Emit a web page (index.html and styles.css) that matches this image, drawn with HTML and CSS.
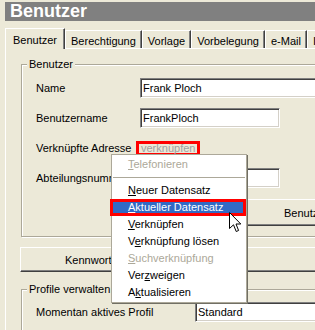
FILE: index.html
```html
<!DOCTYPE html>
<html lang="de">
<head>
  <meta charset="UTF-8" />
  <meta name="viewport" content="width=device-width, initial-scale=1.0"/>
  <title>Benutzer</title>
  <link rel="stylesheet" href="styles.css">
</head>
<body>

  <div class="window">
    <div class="caption">Benutzer</div>

    <div class="tabs">
      <div class="tab active">Benutzer</div>
      <div class="tab">Berechtigung</div>
      <div class="tab">Vorlage</div>
      <div class="tab">Vorbelegung</div>
      <div class="tab">e-Mail</div>
      <div class="tab">Info</div>
    </div>

    <div class="panel">
      <fieldset class="group">
        <legend>Benutzer</legend>
        <div class="form">
          <label>Name</label>
          <input type="text" class="field long" value="Frank Ploch" />

          <label>Benutzername</label>
          <input type="text" class="field" value="FrankPloch" />

          <label>Verknüpfte Adresse</label>
          <span class="link">verknüpfen</span>

          <label>Abteilungsnummer</label>
          <input type="text" class="field" value="" />

          <button class="btn user-btn">Benutzerrechte</button>
        </div>
      </fieldset>

      <button class="btn pass-btn">Kennwort ändern</button>

      <fieldset class="group profile">
        <legend>Profile verwalten</legend>
        <div class="form">
          <label>Momentan aktives Profil</label>
          <input type="text" class="field long" value="Standard" />
        </div>
      </fieldset>
    </div>
  </div>

  <!-- context menu of "verknüpfen" -->
  <div class="menu">
    <div class="menu-item disabled"><u>T</u>elefonieren</div>
    <div class="menu-sep"></div>
    <div class="menu-item"><u>N</u>euer Datensatz</div>
    <div class="menu-item current"><u>A</u>ktueller Datensatz</div>
    <div class="menu-item"><u>V</u>erknüpfen</div>
    <div class="menu-item">V<u>e</u>rknüpfung lösen</div>
    <div class="menu-item disabled"><u>S</u>uchverknüpfung</div>
    <div class="menu-item">Ver<u>z</u>weigen</div>
    <div class="menu-item">A<u>k</u>tualisieren</div>
  </div>

  <svg class="cursor" width="13" height="21" viewBox="0 0 13 21">
    <path d="M0.5 0.5 V16.5 L4.5 12.8 L7.2 19.5 L9.6 18.5 L7 12 H11.8 Z" fill="#fff" stroke="#000" stroke-width="1" stroke-linejoin="miter"/>
  </svg>

</body>
</html>
```

FILE: styles.css
```css
* {
  box-sizing: border-box;
}
html, body {
  margin: 0;
}
body {
  position: relative;
  width: 315px;
  height: 330px;
  overflow: hidden;
  background: #ece9d8;
  font-family: "Liberation Sans", Arial, sans-serif;
  font-size: 11px;
  color: #000;
}
.window {
  padding: 2px 0 0 5px;
}
.caption {
  height: 19px;
  line-height: 19px;
  padding-left: 5px;
  background: #808080;
  color: #fff;
  font-size: 18px;
  font-weight: bold;
}

/* tabs */
.tabs {
  position: relative;
  z-index: 1;
  display: flex;
  align-items: flex-end;
  height: 20px;
  margin-top: 7px;
  white-space: nowrap;
}
.tab {
  height: 18px;
  padding: 4px 5px 0;
  line-height: 13px;
  border-top: 1px solid #fff;
  border-left: 1px solid #fff;
  border-right: 1px solid #404040;
  box-shadow: inset -1px 0 #808080;
  background: #ece9d8;
}
.tab.active {
  height: 21px;
  margin-bottom: -1px;
  padding: 5px 7px 0;
}

/* tab page */
.panel {
  height: 290px;
  padding-left: 15px;
  border-top: 1px solid #fff;
  border-left: 1px solid #fff;
}
.group {
  width: 330px;
  min-width: 0;
  margin: 9px 0 0;
  padding: 7px 0 10px;
  border: 1px solid #aca899;
  box-shadow: inset 1px 1px #fff, 1px 1px #fff;
}
.group legend {
  margin-left: 5px;
  padding: 0 2px;
  line-height: 13px;
  background: #ece9d8;
}
.form {
  display: grid;
  grid-template-columns: 104px auto;
  align-items: center;
  row-gap: 10px;
  padding-left: 14px;
}
.form label {
  line-height: 20px;
  white-space: nowrap;
}
.field {
  width: 140px;
  height: 20px;
  padding: 0 2px;
  font: inherit;
  color: #000;
  background: #fff;
  border: 1px solid;
  border-color: #808080 #fff #fff #808080;
  box-shadow: inset 1px 1px #404040, inset -1px -1px #d4d0c8;
  outline: none;
}
.field.long {
  width: 200px;
}
.link {
  justify-self: start;
  margin-left: -4px;
  padding: 0 2px;
  line-height: 9px;
  border: 3px solid #f00;
  color: #a0a0a0;
}

/* buttons */
.btn {
  height: 27px;
  font: inherit;
  color: #000;
  text-align: left;
  white-space: nowrap;
  background: #ece9d8;
  border: 1px solid;
  border-color: #fff #404040 #404040 #fff;
  box-shadow: inset -1px -1px #808080;
}
.user-btn {
  grid-column: 2;
  width: 200px;
  margin-top: 1px;
  padding-left: 143px;
}
.pass-btn {
  display: block;
  width: 320px;
  height: 25px;
  margin: 10px 0 0 -1px;
  padding-left: 44px;
}
.group.profile {
  margin-top: 11px;
  padding-top: 6px;
}
.profile .form {
  grid-template-columns: 159px auto;
}

/* context menu */
.menu {
  position: absolute;
  left: 111px;
  top: 154px;
  width: 136px;
  padding: 1px;
  background: #fff;
  border: 1px solid #aca899;
  box-shadow: 1px 1px 0 #716f64;
}
.menu-item {
  height: 17px;
  line-height: 17px;
  padding-left: 15px;
  white-space: nowrap;
}
.menu-item.disabled {
  color: #aca899;
}
.menu-item.current {
  margin: 0 -1px 0 -3px;
  padding-left: 18px;
  background: #316ac5;
  color: #fff;
  box-shadow: inset 0 0 0 3px #f00;
}
.menu-sep {
  height: 1px;
  margin: 4px 0;
  background: #aca899;
}
.cursor {
  position: absolute;
  left: 229px;
  top: 212px;
}
```
